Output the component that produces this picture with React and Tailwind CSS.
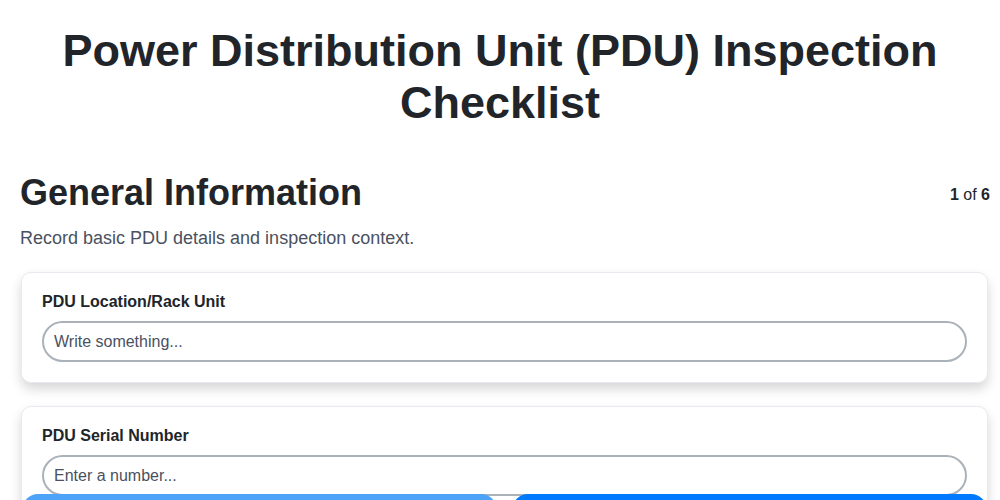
import { useState } from 'react';

// Campos del primer paso
const fields = [
  { id: 'location', label: 'PDU Location/Rack Unit', placeholder: 'Write something...', type: 'text' },
  { id: 'serial', label: 'PDU Serial Number', placeholder: 'Enter a number...', type: 'text' },
];

const App = () => {
  const [values, setValues] = useState({ location: '', serial: '' });

  const handleChange = e => {
    const { name, value } = e.target;
    setValues(prev => ({ ...prev, [name]: value }));
  };

  return (
    <div className="min-h-screen bg-white text-[#212529] font-['Liberation_Sans',Arial,sans-serif]">
      <h1 className="pt-[25px] px-5 text-center text-[45px] leading-[52px] font-bold">
        Power Distribution Unit (PDU) Inspection Checklist
      </h1>

      <div className="pl-5 pr-[10px] mt-[42px]">
        {/* Cabecera de la sección */}
        <div className="flex items-start justify-between">
          <h2 className="text-[36px] leading-[43px] font-bold">General Information</h2>
          <span className="text-base mt-[12px]">
            <b>1</b> of <b>6</b>
          </span>
        </div>
        <p className="mt-[11px] text-[18px] text-[#4a5160]">Record basic PDU details and inspection context.</p>

        <div className="mt-[20px] flex flex-col gap-[23px] pb-24">
          {fields.map(f => (
            <div
              key={f.id}
              className="ml-[1px] mr-[2px] bg-white border border-[#e9eaef] rounded-[10px] px-5 pt-[17px] pb-[20px] shadow-[0_6px_12px_rgba(0,0,0,0.16)]">
              <label className="block text-base leading-6 font-bold mb-[7px]">{f.label}</label>
              <input
                name={f.id}
                type={f.type}
                value={values[f.id]}
                onChange={handleChange}
                placeholder={f.placeholder}
                className="w-full h-[41px] rounded-full border-2 border-[#aab1b9] px-[10px] text-base text-[#212529] placeholder:text-[#4a5160] outline-none"
              />
            </div>
          ))}
        </div>
      </div>

      {/* Botones de navegación */}
      <div className="fixed left-0 right-0 top-[494px] flex gap-[15px] pl-[22px] pr-[13px]">
        <button className="flex-1 h-[72px] pt-[24px] rounded-[16px] bg-[#4da3f8] text-white font-bold">Previous</button>
        <button className="flex-1 h-[72px] pt-[24px] rounded-[16px] bg-[#007bff] text-white font-bold">Next</button>
      </div>
    </div>
  );
};

export default App;
